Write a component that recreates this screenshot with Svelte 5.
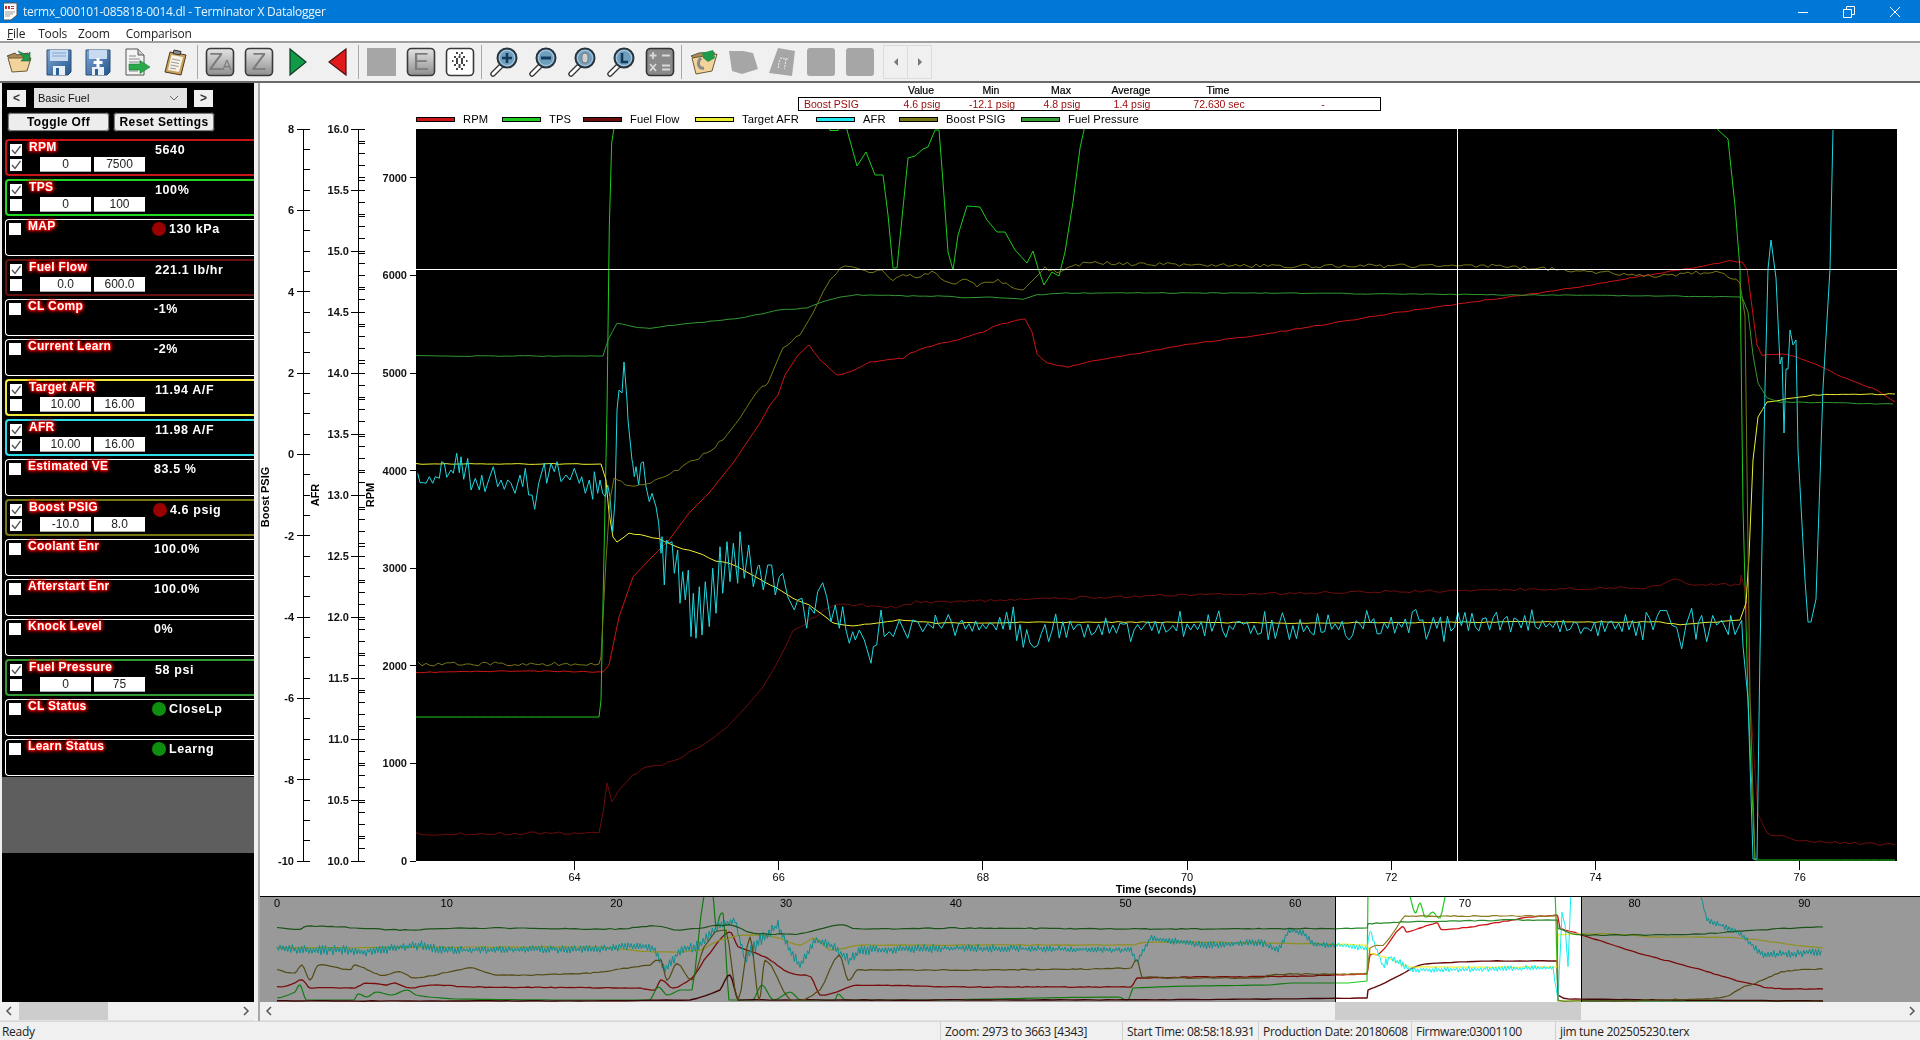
<script>
	// seeded noise so the traces stay the same on every load
	function rng(seed) {
		return () => (seed = (seed * 16807) % 2147483647) / 2147483647;
	}

	// points in zoomed crop coords -> screen coords
	function crop(str, ox, oy, sx, sy) {
		return str
			.trim()
			.split(/\s+/)
			.map((p) => {
				const [x, y] = p.split(',').map(Number);
				return [ox + x / sx, oy + y / sy];
			});
	}

	function jitter(pts, amp, step, seed) {
		const r = rng(seed);
		const out = [];
		for (let i = 0; i < pts.length - 1; i++) {
			const [x0, y0] = pts[i];
			const [x1, y1] = pts[i + 1];
			const n = Math.max(1, Math.round(Math.abs(x1 - x0) / step));
			for (let k = 0; k < n; k++) {
				const t = k / n;
				const flat = Math.abs(y1 - y0) < Math.abs(x1 - x0);
				const a = flat ? amp : 0;
				out.push([x0 + (x1 - x0) * t, y0 + (y1 - y0) * t + (r() - 0.5) * 2 * a]);
			}
		}
		out.push(pts[pts.length - 1]);
		return out;
	}

	// pts are [x, y, amp], jagged wideband look: sign mostly flips each step, size varies a lot
	function zigzag(pts, step, seed, flip = 1) {
		const r = rng(seed);
		const out = [];
		let sign = 1;
		for (let i = 0; i < pts.length - 1; i++) {
			const [x0, y0, a0] = pts[i];
			const [x1, y1, a1] = pts[i + 1];
			const n = Math.max(1, Math.round(Math.abs(x1 - x0) / step));
			for (let k = 0; k < n; k++) {
				const t = k / n;
				if (r() < flip) sign = -sign;
				const a = a0 + (a1 - a0) * t;
				const size = flip < 1 ? 0.1 + 0.9 * r() * r() : 0.25 + 0.75 * r();
				out.push([x0 + (x1 - x0) * t, y0 + (y1 - y0) * t + sign * a * size]);
			}
		}
		return out;
	}

	// the overview was traced with few points. x stays linear and y is clamped
	// to the segment, otherwise the near-vertical steps turn into loops
	function smooth(pts, sub = 4) {
		const out = [];
		for (let i = 0; i < pts.length - 1; i++) {
			const p0 = pts[Math.max(0, i - 1)];
			const p1 = pts[i];
			const p2 = pts[i + 1];
			const p3 = pts[Math.min(pts.length - 1, i + 2)];
			const lo = Math.min(p1[1], p2[1]);
			const hi = Math.max(p1[1], p2[1]);
			for (let k = 0; k < sub; k++) {
				const t = k / sub;
				const t2 = t * t;
				const t3 = t2 * t;
				const y = 0.5 * (2 * p1[1] + (p2[1] - p0[1]) * t + (2 * p0[1] - 5 * p1[1] + 4 * p2[1] - p3[1]) * t2 + (3 * p1[1] - p0[1] - 3 * p2[1] + p3[1]) * t3);
				out.push([p1[0] + (p2[0] - p1[0]) * t, Math.min(hi, Math.max(lo, y))]);
			}
		}
		out.push(pts[pts.length - 1]);
		return out;
	}

	const line = (pts) => pts.map((p) => p[0].toFixed(1) + ',' + p[1].toFixed(1)).join(' ');

	const RED = '#cc1414';
	const GREEN = '#1ecb1e';
	const MAROON = '#6e0c0c';
	const YELLOW = '#eeee30';
	const CYAN = '#20d8e0';
	const OLIVE = '#777715';
	const FPGREEN = '#339933';

	/* ---- main plot ---- */
	const rpm = [[416,673],[440,672],[520,671],[603,672],[609,665],[619,617],[633,577],[649,560],[669,540],[689,513],[709,493],[733,463],[760,423],[770,405],[778,395],[785,375],[798,355],[809,345],[820,360],[837,375],[847,373],[870,362],[903,358],[910,353],[937,344],[953,341],[983,332],[997,325],[1025,319],[1032,332],[1037,354],[1047,363],[1068,367],[1093,361],[1140,353],[1190,344],[1260,335],[1400,312],[1560,290],[1660,273],[1693,268],[1730,261],[1742,262],[1747,269],[1752,307],[1757,345],[1762,355],[1787,354],[1810,362],[1847,379],[1877,390],[1895,402]];
	const tps = [[416,717],[599,717],[601,700],[607,410],[609.3,227],[611.7,143],[613.7,130],[620,100],[826,100],[830,130.5],[838,130.5],[842,100],[846,125],[847,130],[857,166],[866,152],[875,175],[883,175],[888,215],[893,268],[897,268],[903,208],[908,158],[915,156],[923,149],[928,147],[935,130],[939,130],[943,182],[948,252],[953,270],[958,235],[967,206],[980,207],[987,220],[997,232],[1005,232],[1015,250],[1027,263],[1033,251],[1038,268],[1044,285],[1052,272],[1059,276],[1065,252],[1073,202],[1080,148],[1084,130],[1090,100],[1712,100],[1718,130],[1728,139],[1735,206],[1740,269],[1743,508],[1748,699],[1755,860],[1895,860]];
	const flow = [[416,834],[599,833],[603,813],[607,783],[612,802],[619,790],[633,775],[646,767],[673,762],[699,747],[726,728],[746,707],[763,687],[776,665],[793,632],[806,623],[829,607],[843,604],[896,607],[916,602],[1020,600],[1100,597],[1300,593],[1500,590],[1660,587],[1675,579],[1687,584],[1740,585],[1741,575],[1746,594],[1750,699],[1758,814],[1767,833],[1800,841],[1895,845]];
	const target = [[416,464],[601,464],[606,480],[609,513],[613,537],[617,542],[629,533],[646,536],[659,539],[676,547],[696,552],[716,561],[729,563],[749,573],[776,588],[793,598],[809,605],[833,623],[853,626],[899,620],[936,623],[1100,622],[1300,623],[1500,622],[1660,622],[1680,625],[1740,620],[1746,603],[1749,556],[1753,460],[1758,417],[1767,402],[1793,398],[1813,395],[1895,394]];
	const boost = [[418,664],[599,664],[601,657],[606,560],[610,500],[614,478],[629,487],[643,485],[666,475],[699,458],[723,440],[740,418],[750,402],[762,385],[768,383],[783,347],[800,335],[813,313],[823,292],[830,280],[840,270],[845,266],[873,273],[882,270],[893,282],[903,275],[917,277],[932,272],[953,285],[963,278],[977,286],[998,280],[1023,290],[1033,280],[1045,268],[1057,273],[1083,263],[1260,266],[1500,266],[1660,276],[1720,271],[1740,283],[1745,316],[1750,699],[1755,859]];
	const fuelp = [[416,356],[603,356],[608,340],[617,323],[633,327],[650,328],[740,318],[780,310],[807,308],[823,302],[840,297],[857,295],[907,296],[950,296],[963,298],[987,297],[1023,299],[1037,295],[1060,293],[1260,293],[1660,296],[1742,297],[1748,312],[1753,355],[1758,383],[1767,398],[1780,402],[1893,404]];

	const afrA = crop('5,220 12,248 22,248 30,250 40,230 50,250 58,230 70,235 77,185 85,190 92,232 105,210 112,220 122,160 130,218 135,170 143,238 155,175 165,270 178,235 190,270 197,225 207,275 218,240 232,200 245,260 255,240 265,268 275,240 285,250 297,280 312,225 320,260 328,205 338,285 348,285 356,328 368,250 385,190 392,250 405,190 415,215 423,185 435,245 450,225 462,240 475,205 490,250 497,230 508,280 520,240 530,298 535,215 545,280 552,240 560,280 568,290 575,255 582,290 590,395 597,300', 416, 400, 3, 3);
	const afrPeak = [[617,410],[619,390],[622,393],[624,362],[627,400],[628,420],[632,460]];
	const afrB = crop('650,190 655,230 660,200 668,255 675,190 682,185 690,260 700,305 708,280 720,320 728,370 735,460 738,410 745,555 752,420 760,430 768,425 775,520 785,450 792,610 800,515 808,600 817,510 825,710 832,580 840,715 850,560 858,705 868,545 880,680 890,505 900,640 912,440 920,580 933,425 942,545 952,430 965,550 972,395 985,535 998,435 1012,560 1025,500 1030,495 1042,570 1055,495 1067,495 1078,585 1090,530 1100,520 1115,590 1135,630 1145,600 1158,595 1172,685 1180,620 1195,640 1205,575 1220,548 1232,590 1245,665 1258,615 1270,685 1280,620 1290,690 1300,730 1310,695 1318,720 1330,690 1345,720 1352,745 1365,790 1372,740 1382,735 1395,630 1405,710 1420,695 1432,710 1450,660 1475,715 1490,660 1505,665 1520,695 1535,670 1552,685 1558,645', 416, 400, 3, 3);
	const afrMid = zigzag([[938,626,20],[1010,627,22],[1030,640,28],[1045,628,22],[1120,627,18],[1300,628,20],[1500,622,24],[1560,626,18],[1660,626,18]], 3.5, 77, 0.8);
	const afrC = crop('0,1015 20,1015 35,1045 50,1050 65,1095 78,1045 95,1010 108,1075 115,1040 125,1025 140,1080 158,1025 170,1045 185,1035 205,1065 212,1025 225,1065 245,1035', 1660, 125, 3, 2.09);
	const afrD = [[1743,646],[1748,699],[1753,859],[1757,859],[1760,651],[1765,388],[1768,269],[1771,240],[1776,278],[1780,364],[1782,357],[1784,433],[1786,369],[1788,369],[1790,330],[1793,345],[1796,340],[1798,450],[1805,580],[1808,622],[1811,622],[1816,599],[1819,508],[1823,388],[1830,269],[1833,130]];
	const afr = [...afrA, ...afrPeak, ...afrB, ...afrMid, ...afrC, ...afrD];

	const traces = [
		{ c: RED, p: jitter(rpm, 0.5, 5, 11) },
		{ c: GREEN, p: jitter(tps, 0, 8, 12) },
		{ c: MAROON, p: jitter(flow, 1.4, 5, 13) },
		{ c: YELLOW, p: jitter(target, 0.5, 6, 14) },
		{ c: CYAN, p: afr },
		{ c: OLIVE, p: jitter(boost, 1.9, 4, 15) },
		{ c: FPGREEN, p: jitter(fuelp, 0.4, 6, 16) }
	];

	const legend = [
		['RPM', RED],
		['TPS', GREEN],
		['Fuel Flow', MAROON],
		['Target AFR', YELLOW],
		['AFR', '#20e8f0'],
		['Boost PSIG', OLIVE],
		['Fuel Pressure', FPGREEN]
	];

	/* ---- axes ---- */
	const TOP = 129;
	const BOT = 861;
	const boostMajor = [8, 6, 4, 2, 0, -2, -4, -6, -8, -10].map((v) => ({ v, y: BOT - ((v + 10) / 18) * (BOT - TOP) }));
	const boostMinor = Array.from({ length: 37 }, (_, i) => BOT - (i / 36) * (BOT - TOP));
	const afrMajor = Array.from({ length: 13 }, (_, i) => {
		const v = 10 + i * 0.5;
		return { v: v.toFixed(1), y: BOT - (i / 12) * (BOT - TOP) };
	});
	const afrMinor = Array.from({ length: 61 }, (_, i) => BOT - (i / 60) * (BOT - TOP));
	const afrExtra = Array.from({ length: 20 }, (_, i) => TOP + (0.1 + 0.3 * i) * ((BOT - TOP) / 6) + 2.3);
	const rpmMajor = [0, 1000, 2000, 3000, 4000, 5000, 6000, 7000].map((v) => ({ v, y: BOT - v * 0.0976 }));
	const timeTicks = [64, 66, 68, 70, 72, 74, 76].map((v) => ({ v, x: 574.5 + (v - 64) * 102.1 }));

	/* ---- overview strip ---- */
	const miniTicks = Array.from({ length: 10 }, (_, i) => ({ v: i * 10, x: 277 + i * 169.7 }));

	const mFuelp = [[277,928],[300,929],[307,926],[340,927],[400,930],[460,928],[620,929],[655,926],[680,930],[729,925],[753,933],[796,934],[839,925],[857,929],[960,928],[1140,929],[1367,928],[1368,924],[1402,922],[1557,920],[1558,928],[1577,935],[1634,935],[1701,934],[1756,930],[1823,927]];
	const mTarget = [[277,948],[600,947],[655,952],[700,950],[720,940],[745,935],[775,937],[800,945],[815,938],[830,950],[860,945],[1130,945],[1150,942],[1367,945],[1370,953],[1387,958],[1410,967],[1557,967],[1558,935],[1615,934],[1652,937],[1738,938],[1823,948]];
	const mBoost = [[277,970],[295,973],[302,965],[310,980],[318,965],[350,970],[355,965],[380,975],[400,972],[415,978],[470,968],[485,972],[500,975],[590,973],[650,965],[661,960],[667,980],[677,963],[692,980],[704,947],[726,930],[738,1000],[750,937],[759,1000],[765,960],[790,1000],[820,990],[839,955],[848,980],[857,970],[960,970],[1131,968],[1137,960],[1142,977],[1260,978],[1270,975],[1290,974],[1367,973],[1370,948],[1383,945],[1393,933],[1405,916],[1557,916],[1558,1000],[1581,1001],[1701,999],[1725,997],[1744,987],[1756,983],[1781,972],[1823,969]];
	const mRpm = [[277,987],[290,985],[302,980],[310,988],[355,988],[365,983],[385,985],[395,983],[410,988],[430,985],[470,987],[640,988],[655,990],[661,980],[673,988],[692,978],[704,960],[729,932],[738,947],[765,957],[790,973],[811,977],[820,995],[842,990],[857,985],[960,987],[1131,987],[1137,978],[1367,974],[1370,955],[1380,953],[1402,927],[1407,932],[1437,923],[1442,930],[1557,915],[1560,928],[1580,935],[1634,952],[1695,968],[1756,985],[1787,989],[1823,989]];
	const mFlow = [[277,1001],[690,1000],[720,990],[730,975],[738,1000],[1367,998],[1368,990],[1380,985],[1400,975],[1420,965],[1437,963],[1557,961],[1558,995],[1581,999],[1823,1001]];
	const mTps = [[277,998],[285,996],[295,992],[300,985],[306,1000],[354,1000],[358,994],[367,997],[376,992],[392,995],[407,990],[416,995],[429,997],[456,999],[650,1000],[658,987],[667,995],[680,990],[692,990],[704,896],[713,896],[716,927],[723,913],[729,1000],[753,1000],[762,985],[773,1000],[790,992],[800,1000],[835,1000],[838,994],[845,1000],[930,1000],[1119,997],[1128,1000],[1133,988],[1270,985],[1291,983],[1367,981],[1368,890],[1408,890],[1415,913],[1420,903],[1425,917],[1433,912],[1440,918],[1447,890],[1555,890],[1558,1001],[1823,1001]];
	const mAfr = zigzag([[277,948,4],[300,950,5],[345,950,5],[360,952,5],[420,945,5],[440,950,4],[600,949,4],[640,945,4],[655,950,4],[665,970,5],[680,950,6],[700,945,6],[720,925,5],[735,920,3],[745,960,6],[760,940,8],[778,925,5],[790,950,5],[800,965,5],[815,940,5],[830,945,6],[850,960,6],[860,950,5],[960,948,4],[1131,950,3],[1137,963,3],[1150,938,3],[1205,945,4],[1260,942,4],[1278,950,3],[1290,930,3],[1303,933,3],[1315,945,3],[1337,945,3],[1367,948,3],[1370,930,2],[1383,967,5],[1390,957,4],[1403,965,4],[1410,970,3],[1553,968,3],[1558,1000,1],[1562,913,1],[1565,925,1],[1568,967,1],[1571,890,0],[1700,890,0],[1701,897,1],[1707,920,3],[1738,932,3],[1750,943,3],[1762,955,4],[1823,952,4]], 1.5, 99);

	const mini = [
		{ c: RED, p: jitter(smooth(mRpm), 0.4, 4, 21), w: 1.3 },
		{ c: GREEN, p: jitter(smooth(mTps), 0, 8, 22), w: 1.2 },
		{ c: '#660808', p: jitter(smooth(mFlow), 0.2, 8, 23), w: 1.4 },
		{ c: YELLOW, p: jitter(smooth(mTarget), 0.3, 6, 24), w: 1.2 },
		{ c: '#10eef0', p: mAfr, w: 1 },
		{ c: '#8c7c20', p: jitter(smooth(mBoost), 0.5, 4, 25), w: 1.2 },
		{ c: '#2a8a2a', p: jitter(smooth(mFuelp), 0.5, 5, 26), w: 1.2 }
	];

	/* ---- channel list ---- */
	const rows = [
		{ name: 'RPM', color: '#c81414', val: '5640', c1: true, c2: true, lo: '0', hi: '7500' },
		{ name: 'TPS', color: '#22d622', val: '100%', c1: true, c2: false, lo: '0', hi: '100' },
		{ name: 'MAP', val: '130 kPa', dot: '#990000' },
		{ name: 'Fuel Flow', color: '#661010', val: '221.1 lb/hr', c1: true, c2: false, lo: '0.0', hi: '600.0' },
		{ name: 'CL Comp', val: '-1%' },
		{ name: 'Current Learn', val: '-2%' },
		{ name: 'Target AFR', color: '#f2e83c', val: '11.94 A/F', c1: true, c2: false, lo: '10.00', hi: '16.00' },
		{ name: 'AFR', color: '#2cdcea', val: '11.98 A/F', c1: true, c2: true, lo: '10.00', hi: '16.00' },
		{ name: 'Estimated VE', val: '83.5 %' },
		{ name: 'Boost PSIG', color: '#777715', val: '4.6 psig', dot: '#990000', c1: true, c2: true, lo: '-10.0', hi: '8.0' },
		{ name: 'Coolant Enr', val: '100.0%' },
		{ name: 'Afterstart Enr', val: '100.0%' },
		{ name: 'Knock Level', val: '0%' },
		{ name: 'Fuel Pressure', color: '#339933', val: '58 psi', c1: true, c2: false, lo: '0', hi: '75' },
		{ name: 'CL Status', val: 'CloseLp', dot: '#0f8f0f' },
		{ name: 'Learn Status', val: 'Learng', dot: '#0f8f0f' }
	];

	const readout = ['Boost PSIG', '4.6 psig', '-12.1 psig', '4.8 psig', '1.4 psig', '72.630 sec', '-'];
</script>

{#snippet check(on)}
	<span class="chk">
		{#if on}
			<svg width="12" height="12" viewBox="0 0 12 12"><path d="M2 6 L5 9.5 L10.5 2" fill="none" stroke="#555" stroke-width="1.3" /></svg>
		{/if}
	</span>
{/snippet}

{#snippet chevron(right)}
	<svg width="8" height="10" viewBox="0 0 8 10"><path d={right ? 'M2 1 L6 5 L2 9' : 'M6 1 L2 5 L6 9'} fill="none" stroke="#555" stroke-width="1.5" /></svg>
{/snippet}

{#snippet magnifier(mark)}
	<svg width="30" height="32" viewBox="0 0 30 32">
		<path d="M12 20 L4 28" stroke="#333" stroke-width="5.5" stroke-linecap="round" />
		<path d="M12 20 L4 28" stroke="#fff" stroke-width="3" stroke-linecap="round" />
		<circle cx="18" cy="12" r="9.5" fill="#9fc4dc" stroke="#26323c" stroke-width="2" />
		<circle cx="18" cy="12" r="7" fill="#6f9ebd" />
		{#if mark === 'plus'}
			<path d="M18 7 V17 M13 12 H23" stroke="#123a5c" stroke-width="2.6" />
		{:else if mark === 'minus'}
			<path d="M13 12 H23" stroke="#123a5c" stroke-width="3" />
		{:else if mark === 'mouse'}
			<rect x="15" y="7" width="6" height="10" rx="3" fill="#d0d0d0" stroke="#777" />
		{:else}
			<path d="M16 7 V16 H22" fill="none" stroke="#123a5c" stroke-width="2.6" />
		{/if}
	</svg>
{/snippet}

{#snippet letter(t, small)}
	<svg width="30" height="30" viewBox="0 0 30 30">
		<rect x="1.5" y="1.5" width="27" height="27" rx="4" fill="url(#steel)" stroke="#3a3a3a" stroke-width="1.6" />
		<text x={small ? 11 : 15} y="23" text-anchor="middle" class="bigletter">{t}</text>
		{#if small}<text x="22" y="23" text-anchor="middle" class="smallletter">{small}</text>{/if}
	</svg>
{/snippet}

<div class="window">
	<header class="titlebar">
		<svg class="docicon" width="17" height="19" viewBox="0 0 17 19">
			<path d="M1.5 1 H15 V13 L9 18 H1.5 Z" fill="#fdfdfd" stroke="#555" />
			<path d="M3 3 H13 V7 H3 Z" fill="#fff" />
			<path d="M3 4 h2 v3 h-2 z M6 4 h2 v3 h-2 z M9 4 h3 v1 h-3 z M9 6 h3 v1 h-3 z" fill="#c03030" />
			<path d="M3 10 H13 M3 12 H11 M3 14 H8" stroke="#999" />
		</svg>
		<span class="title">termx_000101-085818-0014.dl - Terminator X Datalogger</span>
		<div class="winbtns">
			<span class="winbtn"><svg width="12" height="12" viewBox="0 0 12 12"><path d="M1 6.5 H11" stroke="#fff" /></svg></span>
			<span class="winbtn"><svg width="12" height="12" viewBox="0 0 12 12"><path d="M.5 3.5 H8.5 V11.5 H.5 Z M3.5 3 V.5 H11.5 V8.5 H9" fill="none" stroke="#fff" /></svg></span>
			<span class="winbtn"><svg width="12" height="12" viewBox="0 0 12 12"><path d="M1 1 L11 11 M11 1 L1 11" stroke="#fff" /></svg></span>
		</div>
	</header>

	<nav class="menubar">
		<span class="m-file"><u>F</u>ile</span>
		<span>Tools</span>
		<span>Zoom</span>
		<span class="m-comp">Comparison</span>
	</nav>

	<div class="toolbar">
		<svg width="0" height="0" class="defs">
			<defs>
				<linearGradient id="steel" x1="0" y1="0" x2="0" y2="1">
					<stop offset="0" stop-color="#e4e4e4" />
					<stop offset="1" stop-color="#8e8e8e" />
				</linearGradient>
				<linearGradient id="blue" x1="0" y1="0" x2="1" y2="1">
					<stop offset="0" stop-color="#7ea6d4" />
					<stop offset="1" stop-color="#23568c" />
				</linearGradient>
			</defs>
		</svg>

		<span class="tool"><svg width="30" height="30" viewBox="0 0 30 30"><path d="M2 9 L10 6 L12 8 L23 6 L24 12 L8 13 Z" fill="#b08a4a" stroke="#555" /><path d="M3 11 L26 11 L22 24 L7 25 Z" fill="#f2d49a" stroke="#6a5a3a" /><path d="M13 4 L22 8 L25 5 V14 L16 14 L19 11 Z" fill="#1f9a4a" stroke="#17633a" stroke-width=".6" /></svg></span>
		<span class="tool"><svg width="30" height="30" viewBox="0 0 30 30"><path d="M3 3 H27 V25 L24 28 H3 Z" fill="url(#blue)" stroke="#2c4f78" /><path d="M6 3 H24 V14 H6 Z" fill="#c7daf0" /><path d="M8 6 H22 M8 9 H22" stroke="#7ea6d4" /><path d="M9 19 H21 V28 H9 Z" fill="#e8eef6" /><path d="M12 21 H15 V28 H12 Z" fill="#2c5f94" /></svg></span>
		<span class="tool"><svg width="30" height="30" viewBox="0 0 30 30"><path d="M3 3 H27 V25 L24 28 H3 Z" fill="url(#blue)" stroke="#2c4f78" /><path d="M6 3 H24 V12 H6 Z" fill="#c7daf0" /><path d="M9 20 H21 V28 H9 Z" fill="#e8eef6" /><path d="M12 22 H15 V28 H12 Z" fill="#2c5f94" /><path d="M15 11 V20 M10.5 15.5 H19.5" stroke="#fff" stroke-width="3" /></svg></span>
		<span class="tool"><svg width="30" height="30" viewBox="0 0 30 30"><path d="M4 2 H16 L22 8 V28 H4 Z" fill="#f4f4f4" stroke="#555" /><path d="M16 2 V8 H22" fill="#ccc" stroke="#555" /><path d="M7 9 H14 M7 12 H18 M7 15 H18 M7 24 H16" stroke="#888" /><path d="M7 17 H18 V13.5 L28 20 L18 26.5 V23 H7 Z" fill="#2aa84a" stroke="#1a7a34" stroke-width=".6" /></svg></span>
		<span class="tool"><svg width="30" height="30" viewBox="0 0 30 30"><path d="M9 5 L25 8 L20 28 L4 25 Z" fill="#c9a05c" stroke="#4a3a20" /><path d="M10.5 8 L22 10 L18 25 L7 23 Z" fill="#f6f2e6" /><path d="M11 12 L19 13.5 M10 15 L18 16.5 M9.5 18 L17.5 19.5 M9 21 L15 22" stroke="#999" /><path d="M13 3 L20 4.5 L19 8 L12 6.5 Z" fill="#8a8a8a" stroke="#333" /></svg></span>
		<span class="sep"></span>
		<span class="tool">{@render letter('Z', 'A')}</span>
		<span class="tool">{@render letter('Z')}</span>
		<span class="tool"><svg width="30" height="30" viewBox="0 0 30 30"><path d="M7 2 L23 15 L7 28 Z" fill="#119a48" stroke="#0e3a22" stroke-width="1.2" /></svg></span>
		<span class="tool"><svg width="30" height="30" viewBox="0 0 30 30"><path d="M24 2 L7 15 L24 28 Z" fill="#e01a1a" stroke="#4a1010" stroke-width="1.2" /></svg></span>
		<span class="sep wide"></span>
		<span class="tool"><span class="graybox"></span></span>
		<span class="tool">{@render letter('E')}</span>
		<span class="tool"><svg width="30" height="30" viewBox="0 0 30 30"><rect x="1.5" y="1.5" width="27" height="27" rx="4" fill="#fff" stroke="#3a3a3a" stroke-width="1.6" /><path d="M11 6 h2 M16 6 h2 M9 10 h2 M13.5 10 h2 M18 10 h2 M11 14 h2 M16 14 h2 M7 14 h1.5 M21 14 h1.5 M9 18 h2 M13.5 18 h2 M18 18 h2 M11 22 h2 M16 22 h2 M14 7.8 h1.5 M11 12 h2 M16 12 h2 M11 16 h2 M16 16 h2 M13.5 20 h2" stroke="#444" stroke-width="1.8" /></svg></span>
		<span class="sep"></span>
		<span class="tool">{@render magnifier('plus')}</span>
		<span class="tool">{@render magnifier('minus')}</span>
		<span class="tool">{@render magnifier('mouse')}</span>
		<span class="tool">{@render magnifier('clock')}</span>
		<span class="tool"><svg width="30" height="30" viewBox="0 0 30 30"><rect x="1.5" y="1.5" width="27" height="27" rx="4" fill="#8a8a8a" stroke="#333" stroke-width="1.6" /><path d="M8 5 V12 M4.5 8.5 H11.5 M17 8.5 H25 M5 17 L11 24 M11 17 L5 24 M17 18.5 H25 M17 22.5 H25" stroke="#d8d8d8" stroke-width="1.8" /></svg></span>
		<span class="sep"></span>
		<span class="tool"><svg width="30" height="30" viewBox="0 0 30 30"><path d="M2 9 L10 6 L25 5 L26 12 L8 14 Z" fill="#b08a4a" stroke="#555" /><path d="M3 11 L28 7 L23 24 L7 27 Z" fill="#f2d49a" stroke="#6a5a3a" /><path d="M13 6 L24 3 L26 11 L19 15 L14 11 Z" fill="#1f9a4a" /><path d="M12 11 C7 16 10 22 15 21" fill="none" stroke="#8a8a8a" stroke-width="3" /></svg></span>
		<span class="tool"><svg width="30" height="30" viewBox="0 0 30 30"><path d="M1 4 L15 4 L25 6 L30 22 L14 27 L4 24 Z" fill="#a6a6a6" /></svg></span>
		<span class="tool"><svg width="30" height="30" viewBox="0 0 30 30"><path d="M11 1 L28 4 L25 29 L2 26 Z" fill="#a6a6a6" /><path d="M13 11 L21 12 M19 12 L17.5 22 M12.5 13 L11 22" stroke="#eee" stroke-dasharray="2 1" /></svg></span>
		<span class="tool"><span class="graybox narrow"></span></span>
		<span class="tool"><span class="graybox narrow"></span></span>
		<span class="steppers">
			<span class="step"><svg width="6" height="8" viewBox="0 0 6 8"><path d="M5 0 V8 L1 4 Z" fill="#777" /></svg></span>
			<span class="step"><svg width="6" height="8" viewBox="0 0 6 8"><path d="M1 0 V8 L5 4 Z" fill="#777" /></svg></span>
		</span>
	</div>

	<main class="main">
		<aside class="side">
			<div class="list">
				<div class="pickrow">
					<span class="arrowbtn">&lt;</span>
					<span class="combo">
						<span>Basic Fuel</span>
						<svg width="10" height="6" viewBox="0 0 10 6"><path d="M1 1 L5 5 L9 1" fill="none" stroke="#666" /></svg>
					</span>
					<span class="arrowbtn">&gt;</span>
				</div>
				<div class="btnrow">
					<span class="btn first">Toggle Off</span>
					<span class="btn">Reset Settings</span>
				</div>
				{#each rows as r}
					<div class="row" class:plain={!r.color} style:border-color={r.color}>
						<div class="checks">
							{@render check(r.c1)}
							{#if r.lo}{@render check(r.c2)}{/if}
						</div>
						<div class="mid">
							<span class="name">{r.name}</span>
							{#if r.lo}
								<div class="range">
									<span class="num">{r.lo}</span>
									<span class="num">{r.hi}</span>
								</div>
							{/if}
						</div>
						<div class="val" class:withdot={r.dot}>
							{#if r.dot}<span class="dot" style:background={r.dot}></span>{/if}
							<span>{r.val}</span>
						</div>
					</div>
				{/each}
				<div class="slack"></div>
			</div>
			<div class="hscroll">
				<span class="cap">{@render chevron(false)}</span>
				<span class="track"><span class="thumb leftthumb"></span></span>
				<span class="cap">{@render chevron(true)}</span>
			</div>
		</aside>

		<div class="splitter"></div>

		<section class="graph">
			<div class="readhead">
				<span></span><span>Value</span><span>Min</span><span>Max</span><span>Average</span><span>Time</span><span></span>
			</div>
			<div class="readbox">
				{#each readout as t}<span>{t}</span>{/each}
			</div>
			<div class="legend">
				{#each legend as [name, color]}
					<span class="legitem"><span class="swatch" style:background={color}></span>{name}</span>
				{/each}
			</div>

			<svg class="plotsvg" width="1660" height="771" viewBox="260 125 1660 771">
				<defs>
					<clipPath id="plotclip"><rect x="416" y="129" width="1481" height="732" /></clipPath>
				</defs>
				<rect x="416" y="129" width="1481" height="732" fill="#000" />
				<g clip-path="url(#plotclip)" fill="none" stroke-width="1" stroke-linejoin="round">
					{#each traces as t}
						<polyline points={line(t.p)} stroke={t.c} />
					{/each}
				</g>
				<rect x="416" y="269" width="1481" height="1" fill="#fff" />
				<rect x="1457" y="129" width="1" height="732" fill="#fff" />

				<g class="ticks">
					<path d="M303.5 129 V861" />
					{#each boostMinor as y}<path d="M303 {y} H310" />{/each}
					{#each boostMajor as t}<path d="M297 {t.y} H303" />{/each}
					<path d="M358.5 129 V861" />
					{#each afrMinor as y}<path d="M358 {y} H365" />{/each}
					{#each afrExtra as y}<path d="M358 {y} H365" />{/each}
					{#each afrMajor as t}<path d="M351 {t.y} H358" />{/each}
					{#each rpmMajor as t}<path d="M410 {t.y} H416" />{/each}
					{#each timeTicks as t}<path d="M{t.x} 861 V870" />{/each}
				</g>
				<g class="ylabels">
					{#each boostMajor as t}<text x="294" y={t.y + 4}>{t.v}</text>{/each}
					{#each afrMajor as t}<text x="349" y={t.y + 4}>{t.v}</text>{/each}
					{#each rpmMajor as t}<text x="407" y={t.y + 4}>{t.v}</text>{/each}
				</g>
				<g class="xlabels">
					{#each timeTicks as t}<text x={t.x} y="881">{t.v}</text>{/each}
				</g>
				<text class="axistitle" transform="translate(269 497) rotate(-90)">Boost PSIG</text>
				<text class="axistitle" transform="translate(319 495) rotate(-90)">AFR</text>
				<text class="axistitle" transform="translate(374 495) rotate(-90)">RPM</text>
				<text class="axistitle" x="1156" y="893">Time (seconds)</text>
			</svg>

			<svg class="stripsvg" width="1660" height="106" viewBox="260 896 1660 106">
				<rect x="260" y="896" width="1660" height="106" fill="#fff" />
				<g fill="none" stroke-linejoin="round">
					{#each mini as t}
						<polyline points={line(t.p)} stroke={t.c} stroke-width={t.w} />
					{/each}
				</g>
				<rect class="shade" x="260" y="896" width="1075" height="106" />
				<rect class="shade" x="1581" y="896" width="339" height="106" />
				<rect x="260" y="896" width="1660" height="1" fill="#000" />
				<rect x="1335" y="896" width="1" height="106" fill="#000" />
				<rect x="1581" y="896" width="1" height="106" fill="#000" />
				{#each miniTicks as t}<text class="minitext" x={t.x} y="907">{t.v}</text>{/each}
			</svg>

			<div class="hscroll">
				<span class="cap">{@render chevron(false)}</span>
				<span class="track"><span class="thumb rightthumb"></span></span>
				<span class="cap">{@render chevron(true)}</span>
			</div>
		</section>
	</main>

	<footer class="status">
		<span class="pane ready">Ready</span>
		<span class="pane zoom">Zoom: 2973 to 3663 [4343]</span>
		<span class="pane start">Start Time: 08:58:18.931</span>
		<span class="pane prod">Production Date: 20180608</span>
		<span class="pane firm">Firmware:03001100</span>
		<span class="pane tune">jim tune 202505230.terx</span>
	</footer>
</div>

<style>
	:global(body) {
		margin: 0;
		background: #f0f0f0;
	}

	.window {
		width: 1920px;
		height: 1040px;
		display: flex;
		flex-direction: column;
		overflow: hidden;
		font-family: 'Open Sans', sans-serif;
		font-size: 12px;
		color: #000;
	}

	.titlebar {
		height: 23px;
		flex: none;
		background: #0078d7;
		display: flex;
		align-items: center;
		color: #fff;
	}
	.docicon {
		margin-left: 2px;
		margin-right: 4px;
		flex: none;
	}
	.title {
		letter-spacing: -0.27px;
		color: #eaf4fc;
	}
	.winbtns {
		margin-left: auto;
		margin-right: 2px;
		display: flex;
	}
	.winbtn {
		width: 46px;
		height: 23px;
		display: flex;
		align-items: center;
		justify-content: center;
	}

	.menubar {
		height: 18px;
		flex: none;
		background: #fff;
		display: flex;
		align-items: center;
		padding: 2px 0 0 7px;
		gap: 11px;
		letter-spacing: -0.2px;
		box-sizing: border-box;
		color: #222;
	}
	.m-file {
		margin-right: 2px;
	}
	.m-comp {
		margin-left: 5px;
	}

	.toolbar {
		height: 42px;
		flex: none;
		box-sizing: border-box;
		background: #f0f0f0;
		border-top: 2px solid #a0a0a0;
		border-bottom: 2px solid #6a6a6a;
		display: flex;
		align-items: center;
	}
	.defs {
		position: absolute;
	}
	.tool {
		width: 39px;
		display: flex;
		justify-content: center;
		align-items: center;
		flex: none;
	}
	.sep {
		width: 5px;
		height: 34px;
		flex: none;
		position: relative;
	}
	.sep::after {
		content: '';
		position: absolute;
		left: 2px;
		top: 0;
		bottom: 0;
		width: 1px;
		background: #a8a8a8;
	}
	.sep.wide {
		width: 6px;
	}
	.graybox {
		width: 29px;
		height: 28px;
		background: #a6a6a6;
	}
	.graybox.narrow {
		width: 28px;
		border-radius: 3px;
	}
	.bigletter {
		font-family: 'Liberation Sans', sans-serif;
		font-size: 24px;
		fill: #7c7c7c;
	}
	.smallletter {
		font-family: 'Liberation Sans', sans-serif;
		font-size: 14px;
		fill: #7c7c7c;
	}
	.steppers {
		display: flex;
		margin-left: 4px;
		height: 34px;
	}
	.step {
		width: 23px;
		border: 1px solid #dcdcdc;
		margin-right: -1px;
		display: flex;
		align-items: center;
		justify-content: center;
		box-sizing: content-box;
	}

	.main {
		flex: 1;
		min-height: 0;
		display: flex;
	}

	.side {
		width: 254px;
		flex: none;
		display: flex;
		flex-direction: column;
		background: #f0f0f0;
	}
	.list {
		flex: 1;
		min-height: 0;
		margin-left: 2px;
		background: #000;
		display: flex;
		flex-direction: column;
		overflow: hidden;
		font-family: 'Liberation Sans', sans-serif;
	}

	.pickrow {
		display: flex;
		align-items: center;
		margin: 5px 0 0 5px;
		height: 20px;
		flex: none;
	}
	.arrowbtn {
		width: 19px;
		height: 17px;
		background: #f0f0f0;
		display: flex;
		align-items: center;
		justify-content: center;
		font-weight: 700;
		font-size: 12px;
		color: #333;
	}
	.combo {
		width: 153px;
		height: 20px;
		margin: 0 7px 0 8px;
		background: #e3e3e3;
		box-sizing: border-box;
		display: flex;
		align-items: center;
		justify-content: space-between;
		padding: 0 8px 0 4px;
		font-size: 11px;
		color: #111;
	}

	.btnrow {
		display: flex;
		gap: 3px;
		margin: 4px 0 0 5px;
		flex: none;
	}
	.btn {
		height: 20px;
		width: 103px;
		box-sizing: border-box;
		border: 1px solid #111;
		outline: 1px solid #777;
		outline-offset: -2px;
		border-radius: 4px;
		background: #ededed;
		display: flex;
		align-items: center;
		justify-content: center;
		font-weight: 700;
		font-size: 12px;
		letter-spacing: 0.4px;
	}
	.btn:last-child {
		width: 102px;
	}

	.row {
		height: 37px;
		flex: none;
		box-sizing: border-box;
		margin: 0 0 3px 3px;
		border: 2px solid #fff;
		border-right: 0;
		border-radius: 4px 0 0 4px;
		display: flex;
	}
	.btnrow + .row {
		margin-top: 7px;
	}
	.row.plain {
		border-width: 1.5px 0 1.5px 1.5px;
	}

	.checks {
		width: 12px;
		margin-left: 3px;
		padding-top: 3px;
		display: flex;
		flex-direction: column;
		gap: 3px;
		flex: none;
	}
	.chk {
		width: 12px;
		height: 12px;
		background: #fff;
		display: block;
		flex: none;
	}
	.chk svg {
		display: block;
	}

	.mid {
		width: 131px;
		flex: none;
	}
	.name {
		display: block;
		height: 12px;
		line-height: 12px;
		padding-left: 7px;
		font-size: 12px;
		font-weight: 700;
		letter-spacing: 0.3px;
		color: #fff;
		white-space: nowrap;
		text-shadow:
			0 0 2px #f00,
			0 0 2px #f00,
			0 0 3px #f00,
			0 0 4px #e00,
			0 0 4px #e00,
			0 0 5px #c00;
	}
	.range {
		display: flex;
		gap: 3px;
		margin: 4px 0 0 18px;
	}
	.num {
		width: 51px;
		height: 15px;
		background: #fff;
		border-bottom: 1px solid #aaa;
		box-sizing: border-box;
		text-align: center;
		line-height: 14px;
		font-size: 12px;
		color: #222;
	}

	.val {
		margin: 3px 0 0 2px;
		height: 12px;
		line-height: 12px;
		color: #fff;
		font-weight: 700;
		font-size: 12.5px;
		letter-spacing: 0.6px;
		white-space: nowrap;
		display: flex;
		align-items: center;
	}
	.val.withdot {
		margin-left: 0;
		gap: 3px;
	}
	.dot {
		width: 14px;
		height: 14px;
		border-radius: 50%;
		flex: none;
	}

	.slack {
		height: 76px;
		flex: none;
		background: #5e5e5e;
		margin-top: -2px;
		margin-left: -2px;
	}

	.hscroll {
		height: 18px;
		flex: none;
		background: #f0f0f0;
		display: flex;
		align-items: stretch;
		border-bottom: 1px solid #e0e0e0;
	}
	.cap {
		width: 17px;
		display: flex;
		align-items: center;
		justify-content: center;
		flex: none;
	}
	.track {
		flex: 1;
		display: flex;
	}
	.thumb {
		background: #cdcdcd;
		display: block;
	}
	.leftthumb {
		width: 89px;
		margin-left: 2px;
	}
	.rightthumb {
		width: 246px;
		margin-left: 1058px;
	}

	.splitter {
		width: 6px;
		flex: none;
		box-sizing: border-box;
		background: #f0f0f0;
		border-right: 2px solid #a8a8a8;
	}

	.graph {
		flex: 1;
		min-width: 0;
		display: flex;
		flex-direction: column;
		background: #fff;
		font-family: 'Liberation Sans', sans-serif;
		font-size: 10.5px;
	}

	.readhead,
	.readbox {
		display: grid;
		grid-template-columns: 88px 70px 70px 70px 70px 104px 104px;
		margin-left: 538px;
		width: 583px;
		box-sizing: border-box;
		justify-items: center;
		flex: none;
	}
	.readhead {
		height: 14px;
		line-height: 14px;
		-webkit-text-stroke: 0.2px #000;
	}
	.readbox {
		height: 14px;
		line-height: 12px;
		border: 1px solid #000;
		color: #a01010;
	}
	.readbox span:first-child {
		justify-self: start;
		padding-left: 5px;
	}

	.legend {
		display: grid;
		grid-template-columns: 86px 81px 112px 121px 83px 122px auto;
		height: 14px;
		align-items: center;
		margin-left: 156px;
		flex: none;
		padding-top: 2px;
		box-sizing: border-box;
		font-size: 11.2px;
	}
	.legitem {
		display: flex;
		align-items: center;
		gap: 8px;
		letter-spacing: 0.1px;
		white-space: nowrap;
	}
	.swatch {
		width: 39px;
		height: 5px;
		box-sizing: border-box;
		border: 1px solid #000;
	}

	.plotsvg {
		display: block;
		overflow: visible;
		flex: none;
	}
	.ticks path {
		stroke: #000;
		stroke-width: 1;
		fill: none;
		shape-rendering: crispEdges;
	}
	.ylabels text {
		font-size: 11px;
		font-weight: 700;
		text-anchor: end;
		fill: #111;
	}
	.xlabels text {
		font-size: 11px;
		text-anchor: middle;
		fill: #000;
	}
	.axistitle {
		font-size: 11px;
		font-weight: 700;
		text-anchor: middle;
		fill: #000;
	}

	.stripsvg {
		display: block;
		flex: none;
	}
	.shade {
		fill: #999;
		mix-blend-mode: multiply;
	}
	.minitext {
		font-size: 11px;
		text-anchor: middle;
		fill: #000;
	}

	.status {
		height: 19px;
		flex: none;
		box-sizing: border-box;
		display: flex;
		align-items: center;
		background: #f0f0f0;
		border-top: 1px solid #d8d8d8;
		letter-spacing: -0.3px;
		color: #222;
	}
	.pane {
		box-sizing: border-box;
		height: 100%;
		display: flex;
		align-items: center;
		padding-left: 4px;
		white-space: nowrap;
		border-left: 1px solid #d0d0d0;
		flex: none;
	}
	.ready {
		width: 940px;
		padding-left: 2px;
		border-left: 0;
	}
	.zoom {
		width: 182px;
	}
	.start {
		width: 136px;
	}
	.prod {
		width: 153px;
	}
	.firm {
		width: 144px;
	}
	.tune {
		flex: 1;
	}
</style>
